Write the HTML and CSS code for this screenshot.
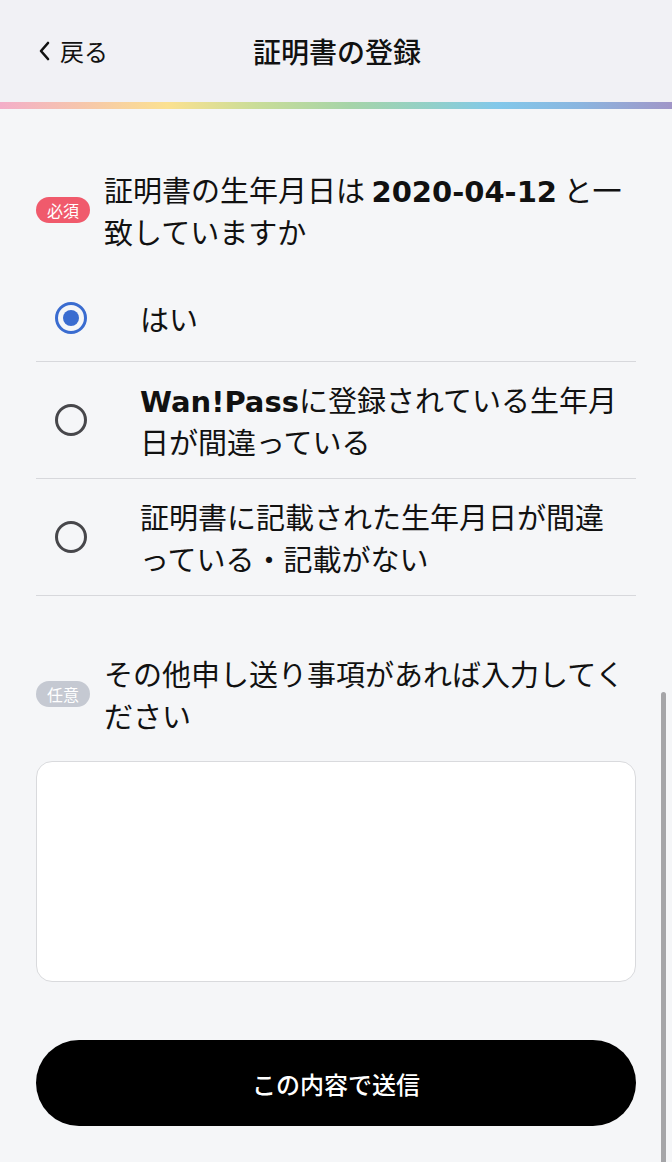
FILE: index.html
```html
<!DOCTYPE html>
<html lang="ja">
<head>
<meta charset="utf-8">
<title>証明書の登録</title>
<link rel="stylesheet" href="styles.css">
</head>
<body>
<header class="topbar">
  <a class="back" href="#">
    <svg class="chev" width="14" height="22" viewBox="0 0 14 22"><polyline points="10,3 3,11 10,19" fill="none" stroke="#111" stroke-width="2.6" stroke-linecap="round" stroke-linejoin="round"/></svg>
    <span>戻る</span>
  </a>
  <h1 class="title">証明書の登録</h1>
  <span></span>
</header>
<div class="rainbow"></div>

<main class="content">
  <section class="field">
    <div class="question">
      <span class="badge badge-req">必須</span>
      <p class="qtext">証明書の生年月日は <b class="latin">2020-04-12</b> と一致していますか</p>
    </div>
    <ul class="options">
      <li class="opt opt-first">
        <span class="radio radio-on"><span class="dot"></span></span>
        <span class="label">はい</span>
      </li>
      <li class="opt">
        <span class="radio"></span>
        <span class="label"><b class="latin">Wan!Pass</b>に登録されている生年月日が間違っている</span>
      </li>
      <li class="opt">
        <span class="radio"></span>
        <span class="label">証明書に記載された生年月日が間違っている・記載がない</span>
      </li>
    </ul>
  </section>

  <section class="field field-2">
    <div class="question">
      <span class="badge badge-opt">任意</span>
      <p class="qtext">その他申し送り事項があれば入力してください</p>
    </div>
    <textarea class="memo"></textarea>
  </section>

  <button class="submit" type="button">この内容で送信</button>
</main>

<div class="scrollbar"></div>
</body>
</html>
```

FILE: styles.css
```css
* { box-sizing: border-box; }
html, body { margin: 0; padding: 0; }
body {
  width: 672px;
  min-height: 1162px;
  background: #f5f6f8;
  font-family: "Noto Sans CJK JP", "Noto Sans", sans-serif;
  color: #111;
  overflow: hidden;
}
.topbar {
  height: 102px;
  background: #f1f1f5;
  display: grid;
  grid-template-columns: 1fr auto 1fr;
  align-items: center;
  padding: 0 0 0 38px;
}
.back {
  display: flex;
  align-items: center;
  gap: 8px;
  color: #111;
  text-decoration: none;
  font-size: 24px;
  line-height: 1;
}
.chev { display: block; }
.title {
  margin: 0;
  font-size: 28px;
  font-weight: 500;
  line-height: 1;
  transform: translateX(-18px);
}
.rainbow {
  height: 7px;
  background: linear-gradient(90deg, #f3aec9 0%, #f6c6ac 12%, #fbe190 25%, #cadd98 38%, #a6d4a8 52%, #92d0c8 64%, #82c8ea 74%, #8ab6e0 86%, #a196c8 100%);
}
.content {
  padding: 0 36px 40px;
}
.field { margin-top: 59px; }
.field-2 { margin-top: 56px; }
.question {
  display: flex;
  align-items: center;
  gap: 14px;
}
.badge {
  flex: none;
  width: 54px;
  height: 26px;
  border-radius: 13px;
  color: #fff;
  font-size: 16px;
  line-height: 26px;
  text-align: center;
}
.badge-req { background: #f05a6c; }
.badge-opt { background: #c5c9d2; }
.qtext {
  margin: 0;
  font-size: 29px;
  line-height: 42px;
  font-weight: 400;
}
.latin {
  font-family: "DejaVu Sans", "Noto Sans CJK JP", sans-serif;
  font-weight: 700;
  line-height: 1;
}
.options {
  list-style: none;
  margin: 30px 0 0;
  padding: 0;
}
.opt {
  display: flex;
  align-items: center;
  padding: 16px 0;
  border-bottom: 1px solid #d7d8dc;
}
.opt-first { padding: 15px 0 22px; }
.radio {
  flex: none;
  width: 32px;
  height: 32px;
  margin: 0 53px 0 19px;
  border: 3px solid #47474b;
  border-radius: 50%;
  display: flex;
  align-items: center;
  justify-content: center;
}
.radio-on { border-color: #3a6cd0; }
.dot {
  width: 16px;
  height: 16px;
  border-radius: 50%;
  background: #3a6cd0;
}
.label {
  font-size: 29px;
  line-height: 42px;
  width: 486px;
}
.memo {
  display: block;
  width: 100%;
  height: 221px;
  margin-top: 25px;
  background: #fff;
  border: 1px solid #d9dadd;
  border-radius: 16px;
  resize: none;
  font-family: inherit;
}
.submit {
  display: block;
  width: 100%;
  height: 86px;
  margin-top: 58px;
  border: 0;
  border-radius: 43px;
  background: #000;
  color: #fff;
  font-family: "Noto Sans CJK JP", sans-serif;
  font-size: 24px;
  font-weight: 500;
}
.scrollbar {
  position: fixed;
  right: 6px;
  top: 692px;
  width: 5px;
  height: 480px;
  border-radius: 3px;
  background: #a5a5a8;
}
```
